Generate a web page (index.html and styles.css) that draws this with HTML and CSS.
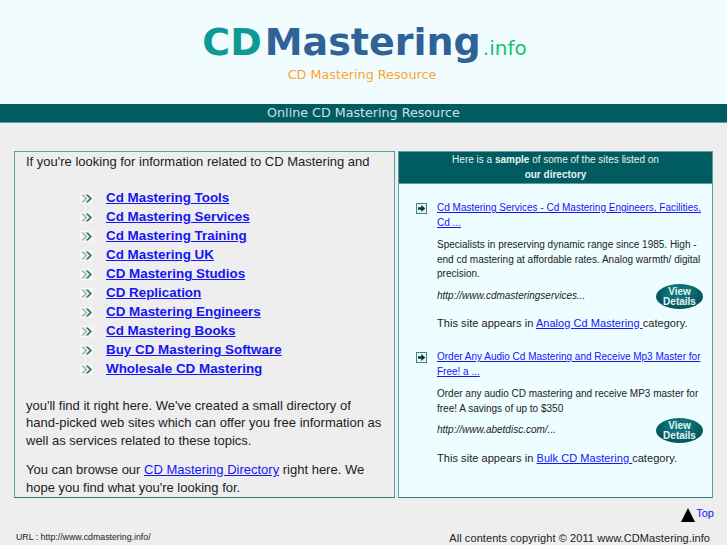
FILE: index.html
```html
<!DOCTYPE html>
<html lang="en">
<head>
    <meta charset="UTF-8">
    <title>CD Mastering Resource</title>
    <link rel="stylesheet" href="styles.css">
</head>
<body>
    <svg class="icon-defs">
        <symbol id="chevrons" viewBox="0 0 13 11">
            <rect width="13" height="11" fill="#f8f8f8"/>
            <path d="M1 1.500 5 5.500 1 9.500H3.500L7.500 5.500 3.500 1.500Z" fill="#a3b8b8"/>
            <path d="M5.500 1.500 9.500 5.500 5.500 9.500H8L12 5.500 8 1.500Z" fill="#3f7373"/>
        </symbol>
        <symbol id="site-arrow" viewBox="0 0 11 11">
            <rect x="0.500" y="0.500" width="10" height="10" fill="#e8f4f4" stroke="#3f8585"/>
            <path d="M2 4.300H5.300V2L9.300 5.500 5.300 9V6.700H2Z" fill="#00393d"/>
        </symbol>
    </svg>

    <header class="header">
        <div class="logo"><span class="logo-cd">CD</span><span class="logo-name">Mastering</span><span class="logo-tld">.info</span></div>
        <div class="tagline">CD Mastering Resource</div>
    </header>
    <div class="title-bar">Online CD Mastering Resource</div>

    <div class="columns">
        <div class="intro">
            <p class="intro-first">If you're looking for information related to CD Mastering and</p>
            <ul class="topics">
                <li><svg class="chevrons"><use href="#chevrons"/></svg><a href="#">Cd Mastering Tools</a></li>
                <li><svg class="chevrons"><use href="#chevrons"/></svg><a href="#">Cd Mastering Services</a></li>
                <li><svg class="chevrons"><use href="#chevrons"/></svg><a href="#">Cd Mastering Training</a></li>
                <li><svg class="chevrons"><use href="#chevrons"/></svg><a href="#">Cd Mastering UK</a></li>
                <li><svg class="chevrons"><use href="#chevrons"/></svg><a href="#">CD Mastering Studios</a></li>
                <li><svg class="chevrons"><use href="#chevrons"/></svg><a href="#">CD Replication</a></li>
                <li><svg class="chevrons"><use href="#chevrons"/></svg><a href="#">CD Mastering Engineers</a></li>
                <li><svg class="chevrons"><use href="#chevrons"/></svg><a href="#">Cd Mastering Books</a></li>
                <li><svg class="chevrons"><use href="#chevrons"/></svg><a href="#">Buy CD Mastering Software</a></li>
                <li><svg class="chevrons"><use href="#chevrons"/></svg><a href="#">Wholesale CD Mastering</a></li>
            </ul>
            <p>you'll find it right here. We've created a small directory of hand-picked web sites which can offer you free information as well as services related to these topics.</p>
            <p class="intro-last">You can browse our <a href="#">CD Mastering Directory</a> right here. We hope you find what you're looking for.</p>
        </div>

        <div class="sample">
            <div class="sample-head">Here is a <b>sample</b> of some of the sites listed on<br><b>our directory</b></div>

            <div class="site">
                <svg class="site-arrow"><use href="#site-arrow"/></svg>
                <div class="site-body">
                    <a class="site-title" href="#">Cd Mastering Services - Cd Mastering Engineers, Facilities, Cd ...</a>
                    <p class="site-desc">Specialists in preserving dynamic range since 1985. High -end cd mastering at affordable rates. Analog warmth/ digital precision.</p>
                    <div class="site-link">
                        <i>http://www.cdmasteringservices...</i>
                        <span class="details">View<br>Details</span>
                    </div>
                    <p class="site-cat">This site appears in <a href="#">Analog Cd Mastering </a>category.</p>
                </div>
            </div>

            <div class="site">
                <svg class="site-arrow"><use href="#site-arrow"/></svg>
                <div class="site-body">
                    <a class="site-title" href="#">Order Any Audio Cd Mastering and Receive Mp3 Master for Free! a ...</a>
                    <p class="site-desc">Order any audio CD mastering and receive MP3 master for free! A savings of up to $350</p>
                    <div class="site-link">
                        <i>http://www.abetdisc.com/...</i>
                        <span class="details">View<br>Details</span>
                    </div>
                    <p class="site-cat">This site appears in <a href="#">Bulk CD Mastering </a>category.</p>
                </div>
            </div>
        </div>
    </div>

    <div class="top-row">
        <svg class="top-arrow" viewBox="0 0 14 14"><path d="M7 0 14 14H0Z" fill="#000"/></svg>
        <a href="#">Top</a>
    </div>
    <footer class="footer">
        <span class="footer-url">URL : http://www.cdmastering.info/</span>
        <span class="footer-copy">All contents copyright &copy; 2011 www.CDMastering.info</span>
    </footer>
</body>
</html>
```

FILE: styles.css
```css
/* Reset */
* {
    margin: 0;
    padding: 0;
    box-sizing: border-box;
}

html, body {
    height: 545px;
    overflow: hidden;
}

body {
    font-family: "Liberation Sans", Arial, sans-serif;
    font-size: 13px;
    color: #222;
    background-color: #eeeeee;
}

a {
    color: #1515f5;
}

.icon-defs {
    display: none;
}

/* Header */
.header {
    height: 104px;
    padding-top: 19px;
    background-color: #f1fcff;
    text-align: center;
    font-family: "DejaVu Sans", sans-serif;
}

.logo {
    height: 47px;
    line-height: 47px;
    white-space: nowrap;
    font-weight: bold;
    font-size: 38px;
}

.logo-cd {
    margin-left: 2px;
    color: #0e9a94;
}

.logo-name {
    margin-left: 3px;
    color: #2f6296;
}

.logo-tld {
    margin-left: 2px;
    font-size: 20px;
    font-weight: normal;
    color: #14c46a;
}

.tagline {
    margin-top: 1px;
    padding-right: 3px;
    font-size: 12.750px;
    color: #f9a52e;
}

.title-bar {
    height: 19px;
    line-height: 18px;
    background-color: #005c60;
    border-bottom: 1px solid #5f9ea0;
    color: #cfe0e0;
    text-align: center;
    font-family: "DejaVu Sans", sans-serif;
    font-size: 12.700px;
}

/* Two columns */
.columns {
    display: flex;
    height: 347px;
    margin: 28px 0 0 14px;
}

.intro {
    width: 381px;
    padding: 1px 11px 0;
    border: 1px solid #5f9ea0;
    border-bottom-color: #2f7f80;
    line-height: 17.500px;
}

.intro-first {
    margin-bottom: 18px;
}

.topics {
    list-style: none;
    margin-left: 54px;
    margin-bottom: 18px;
}

.topics li {
    display: flex;
    align-items: center;
    height: 19px;
    font-size: 13.400px;
    font-weight: bold;
}

.chevrons {
    width: 13px;
    height: 11px;
    margin-right: 13px;
}

.intro-last {
    margin-top: 12px;
}

.sample {
    width: 315px;
    margin-left: 3px;
    border: 1px solid #5f9ea0;
    border-bottom-color: #2f7f80;
    background-color: #eefdff;
    font-size: 10px;
}

.sample-head {
    height: 32px;
    padding-top: 1px;
    background-color: #005c60;
    border-bottom: 1px solid #5f9ea0;
    color: #e8f2f2;
    text-align: center;
    line-height: 14.500px;
}

.site {
    display: flex;
    padding: 17px 9px 0 17px;
    line-height: 14.500px;
}

.site-arrow {
    flex: none;
    width: 11px;
    height: 11px;
    margin-top: 2px;
    margin-right: 10px;
}

.site-body {
    flex: 1;
}

.site-title {
    display: block;
}

.site-desc {
    margin-top: 8px;
}

.site-link {
    display: flex;
    justify-content: space-between;
    align-items: center;
    margin-top: 2px;
    height: 25px;
}

.details {
    width: 47px;
    height: 25px;
    border-radius: 50%;
    background: radial-gradient(ellipse at 50% 30%, #0b7478 30%, #00474b 90%);
    color: #e8f2f2;
    text-align: center;
    font-size: 10px;
    font-weight: bold;
    line-height: 10px;
    padding-top: 3px;
}

.site-cat {
    margin-top: 7px;
    margin-bottom: 3px;
    font-size: 11px;
    letter-spacing: 0.050px;
}

.site + .site .site-cat {
    margin-top: 8px;
}

/* Bottom */
.top-row {
    display: flex;
    justify-content: flex-end;
    align-items: flex-start;
    height: 34px;
    margin-right: 13px;
    padding-top: 9px;
    font-size: 11px;
}

.top-row a {
    text-decoration: none;
}

.top-arrow {
    width: 14px;
    height: 14px;
    margin: 1px 1px 0 0;
}

.footer {
    display: flex;
    justify-content: space-between;
    align-items: flex-end;
    margin: 0 17px 0 16px;
}

.footer-url {
    font-size: 8.800px;
    margin-bottom: 2px;
}

.footer-copy {
    font-size: 11px;
    letter-spacing: 0.080px;
}
```
